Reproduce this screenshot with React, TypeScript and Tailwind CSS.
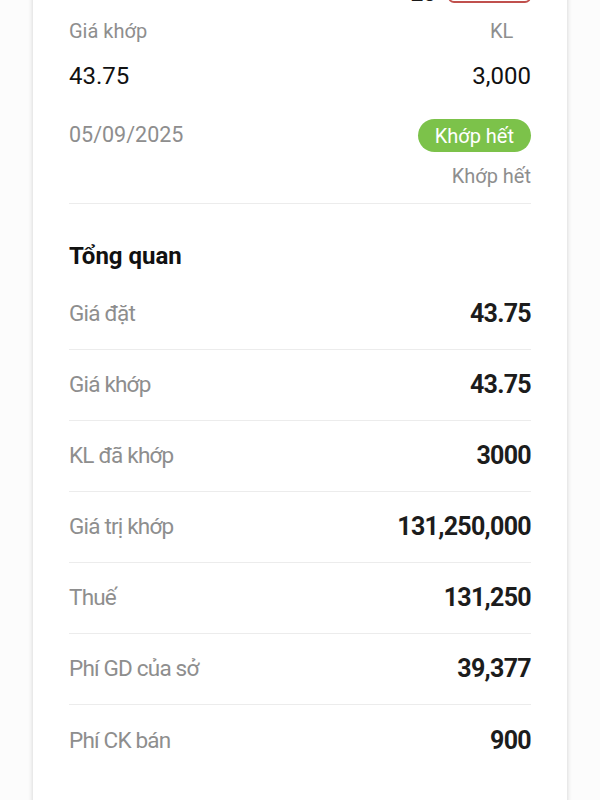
import React from "react";

const rows: [string, string][] = [
  ["Giá đặt", "43.75"],
  ["Giá khớp", "43.75"],
  ["KL đã khớp", "3000"],
  ["Giá trị khớp", "131,250,000"],
  ["Thuế", "131,250"],
  ["Phí GD của sở", "39,377"],
  ["Phí CK bán", "900"],
];

export default function App() {
  return (
    <div
      className="h-[800px] w-[600px] overflow-hidden bg-[#fcfcfc]"
      style={{ fontFamily: "Roboto, 'Noto Sans', sans-serif" }}
    >
      <div className="mx-[33px] -mt-[28px] min-h-[900px] bg-white px-[36px] shadow-[0_0_5px_rgba(0,0,0,0.18)]">
        {/* partially visible top row */}
        <div className="flex h-[31px] items-end justify-between">
          <span className="text-[18px] leading-[24px] text-[#8c8c8c]">Giá</span>
          <div className="flex items-end gap-3">
            <span className="-mb-[4px] text-[22px] font-bold leading-[26px] text-[#1a1a1a]">20</span>
            <span className="flex h-[28px] w-[83px] items-center justify-center rounded-[6px] border-2 border-[#c0504d] text-[16px] text-[#c0504d]">
              Bán
            </span>
          </div>
        </div>

        <div className="mt-[15px] flex justify-between">
          <div className="flex flex-col items-start">
            <span className="text-[20px] leading-[26px] text-[#8e8e8e]">Giá khớp</span>
            <span className="mt-[17px] text-[24px] leading-[30px] text-[#111]">43.75</span>
          </div>
          <div className="flex flex-col items-center">
            <span className="text-[20px] leading-[26px] text-[#8e8e8e]">KL</span>
            <span className="mt-[17px] text-[24px] leading-[30px] text-[#111]">3,000</span>
          </div>
        </div>
        <div className="mt-[28px] flex items-center justify-between">
          <span className="text-[21.5px] text-[#8e8e8e]">05/09/2025</span>
          <span className="flex h-[33px] items-center rounded-full bg-[#7cc24a] px-[17px] text-[20px] text-white">
            Khớp hết
          </span>
        </div>
        <div className="mt-[11px] flex justify-end text-[20px] leading-[26px] text-[#8e8e8e]">
          Khớp hết
        </div>
        <div className="mt-[14px] h-px bg-[#ececec]" />

        <div className="mt-[37px] text-[24px] font-bold leading-[30px] text-[#111]">Tổng quan</div>

        <div className="mt-[8px]">
          {rows.map(([label, value], i) => (
            <div
              key={label}
              className={
                "flex h-[71px] items-center justify-between " +
                (i < rows.length - 1 ? "border-b border-[#ececec]" : "")
              }
            >
              <span className="text-[22.5px] tracking-[-0.8px] text-[#8e8e8e]">{label}</span>
              <span className="text-[25px] font-bold tracking-[-0.7px] text-[#1c1c1c]">{value}</span>
            </div>
          ))}
        </div>
      </div>
    </div>
  );
}
